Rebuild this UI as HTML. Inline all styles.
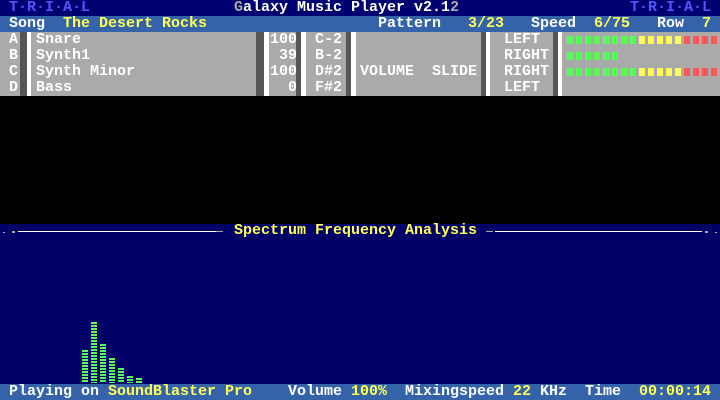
<!DOCTYPE html>
<html><head><meta charset="utf-8"><style>
*{margin:0;padding:0}
body{width:720px;height:400px;background:#000;position:relative;overflow:hidden;font-family:"Liberation Mono",monospace;font-size:15px;line-height:16px;color:#fff;font-weight:bold}
div,span{position:absolute}
.t{white-space:pre;height:16px}
.y{color:#ffff55}
.g{color:#aaa}
.b{color:#5555ff}
.dk{background:#555;top:32px;height:64px}
.wh{background:#fff;top:32px;height:64px}
.seg{width:6px;height:8px}
.sb{bottom:17px;width:6px;background:repeating-linear-gradient(to bottom,#55ff55 0 2px,transparent 2px 3px)}
</style></head><body>
<div style="left:0;top:0;width:720px;height:16px;background:#000070"></div>
<div style="left:0;top:16px;width:720px;height:16px;background:#3563aa"></div>
<div style="left:0;top:32px;width:720px;height:64px;background:#aaa"></div>
<div style="left:0;top:224px;width:720px;height:160px;background:#000066"></div>
<div style="left:0;top:384px;width:720px;height:16px;background:#3563aa"></div>

<div class="t b" style="left:9px;top:0">T·R·I·A·L</div>
<div class="t" style="left:234px;top:0"><span style="position:static" class="g">G</span>alaxy Music Player v2.1<span style="position:static" class="g">2</span></div>
<div class="t b" style="left:630px;top:0">T·R·I·A·L</div>

<div class="t" style="left:9px;top:16px">Song</div>
<div class="t y" style="left:63px;top:16px">The Desert Rocks</div>
<div class="t" style="left:378px;top:16px">Pattern</div>
<div class="t y" style="left:468px;top:16px">3/23</div>
<div class="t" style="left:531px;top:16px">Speed</div>
<div class="t y" style="left:594px;top:16px">6/75</div>
<div class="t" style="left:657px;top:16px">Row</div>
<div class="t y" style="left:702px;top:16px">7</div>

<div class="dk" style="left:20px;width:7px"></div><div class="wh" style="left:27px;width:4px"></div>
<div class="dk" style="left:256px;width:8px"></div><div class="wh" style="left:264px;width:5px"></div>
<div class="dk" style="left:296px;width:5px"></div><div class="wh" style="left:301px;width:5px"></div>
<div class="dk" style="left:346px;width:5px"></div><div class="wh" style="left:351px;width:5px"></div>
<div class="dk" style="left:481px;width:5px"></div><div class="wh" style="left:486px;width:4px"></div>
<div class="dk" style="left:553px;width:5px"></div><div class="wh" style="left:558px;width:4px"></div>

<div class="t" style="left:9px;top:32px">A</div><div class="t" style="left:9px;top:48px">B</div><div class="t" style="left:9px;top:64px">C</div><div class="t" style="left:9px;top:80px">D</div>
<div class="t" style="left:36px;top:32px">Snare</div><div class="t" style="left:36px;top:48px">Synth1</div><div class="t" style="left:36px;top:64px">Synth Minor</div><div class="t" style="left:36px;top:80px">Bass</div>
<div class="t" style="left:270px;top:32px">100</div><div class="t" style="left:279px;top:48px">39</div><div class="t" style="left:270px;top:64px">100</div><div class="t" style="left:288px;top:80px">0</div>
<div class="t" style="left:315px;top:32px">C-2</div><div class="t" style="left:315px;top:48px">B-2</div><div class="t" style="left:315px;top:64px">D#2</div><div class="t" style="left:315px;top:80px">F#2</div>
<div class="t" style="left:360px;top:64px">VOLUME  SLIDE</div>
<div class="t" style="left:504px;top:32px">LEFT</div><div class="t" style="left:504px;top:48px">RIGHT</div><div class="t" style="left:504px;top:64px">RIGHT</div><div class="t" style="left:504px;top:80px">LEFT</div>

<script>
function row(y,n){for(let k=0;k<n;k++){const d=document.createElement('div');d.className='seg';d.style.left=(567+9*k)+'px';d.style.top=y+'px';d.style.background=k<8?'#55ff55':k<13?'#ffff55':'#ff5555';document.body.appendChild(d);}}
row(36,17);row(52,6);row(68,17);
</script>

<div style="left:3px;top:232px;width:2px;height:1px;background:#aaa"></div>
<div style="left:12px;top:231px;width:3px;height:2px;background:#aaa"></div>
<div style="left:18px;top:231px;width:198px;height:1px;background:#fff"></div>
<div style="left:216px;top:231px;width:7px;height:1px;background:#aaa"></div>
<div class="t y" style="left:234px;top:223px">Spectrum Frequency Analysis</div>
<div style="left:486px;top:231px;width:7px;height:1px;background:#aaa"></div>
<div style="left:495px;top:231px;width:207px;height:1px;background:#fff"></div>
<div style="left:705px;top:231px;width:3px;height:2px;background:#aaa"></div>
<div style="left:715px;top:232px;width:2px;height:1px;background:#aaa"></div>

<div class="sb" style="left:82px;top:350px"></div>
<div class="sb" style="left:91px;top:322px"></div>
<div class="sb" style="left:100px;top:344px"></div>
<div class="sb" style="left:109px;top:358px"></div>
<div class="sb" style="left:118px;top:368px"></div>
<div class="sb" style="left:127px;top:376px"></div>
<div class="sb" style="left:136px;top:378px"></div>

<div class="t" style="left:9px;top:384px">Playing on</div>
<div class="t y" style="left:108px;top:384px">SoundBlaster Pro</div>
<div class="t" style="left:288px;top:384px">Volume</div>
<div class="t y" style="left:351px;top:384px">100%</div>
<div class="t" style="left:405px;top:384px">Mixingspeed</div>
<div class="t y" style="left:513px;top:384px">22</div>
<div class="t" style="left:540px;top:384px">KHz</div>
<div class="t" style="left:585px;top:384px">Time</div>
<div class="t y" style="left:639px;top:384px">00:00:14</div>
</body></html>
